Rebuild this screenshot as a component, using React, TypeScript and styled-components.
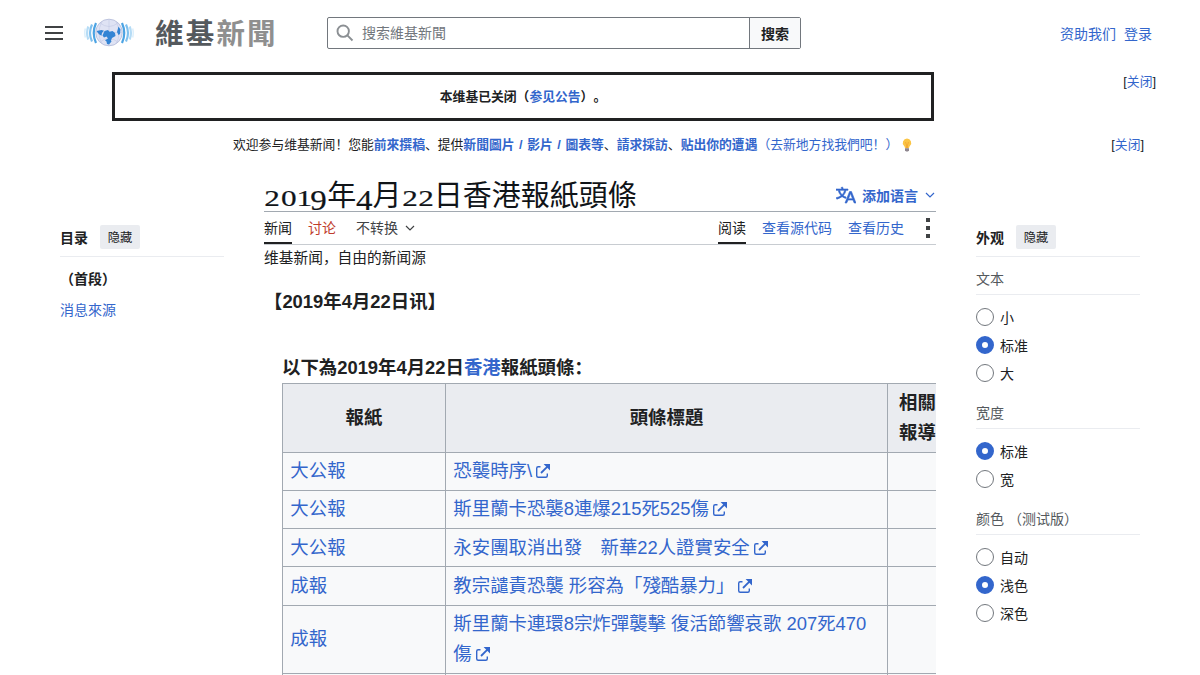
import React from "react";
import styled, { createGlobalStyle, css } from "styled-components";

const sans = `"Liberation Sans", "Noto Sans CJK SC", sans-serif`;
const blue = "#3366cc";

const Global = createGlobalStyle`
  * { box-sizing: border-box; }
  html, body { margin: 0; padding: 0; }
  body { background: #fff; color: #202122; font-family: ${sans}; font-size: 14px; height: 675px; overflow: hidden; }
`;

const Page = styled.div`
  height: 675px;
  overflow: hidden;
`;

const Link = styled.a<{ $bold?: boolean }>`
  color: ${blue};
  font-weight: ${(p) => (p.$bold ? 700 : "inherit")};
  word-spacing: ${(p) => (p.$bold ? "1px" : "normal")};
`;

const Header = styled.header`
  display: flex;
  align-items: center;
  height: 66px;
  padding: 0 48px 0 45px;
`;

const MenuButton = styled.div`
  display: flex;
  flex-direction: column;
  gap: 4px;
  width: 18px;
  span { height: 2px; background: #404244; }
`;

const Globe = styled.svg`
  width: 50px;
  height: 30px;
  margin-left: 21px;
`;

const Wordmark = styled.div`
  width: 172px;
  margin-left: 21px;
  padding-bottom: 2px;
  font-family: "Noto Sans CJK TC", sans-serif;
  font-weight: 700;
  font-size: 28.5px;
  line-height: 34px;
  letter-spacing: 2.2px;
  color: #54595d;
  white-space: nowrap;
  span { color: #8f8f8f; }
`;

const Search = styled.div`
  display: flex;
  width: 474px;
  height: 32px;
  border: 1px solid #72777d;
  border-radius: 2px;
`;

const SearchField = styled.div`
  display: flex;
  flex: 1;
  align-items: center;
  gap: 8px;
  padding-left: 8px;
  color: #72777d;
  line-height: 30px;
`;

const SearchButton = styled.div`
  width: 51px;
  border-left: 1px solid #72777d;
  background: #f8f9fa;
  font-weight: 700;
  line-height: 32px;
  text-align: center;
`;

const UserLinks = styled.nav`
  display: flex;
  gap: 8px;
  margin-left: auto;
  padding-top: 2px;
  line-height: 22px;
`;

const Notices = styled.section`
  font-size: 12.8px;
  line-height: 20px;
`;

const ClosedRow = styled.div`
  display: flex;
  align-items: flex-start;
  justify-content: space-between;
  height: 49px;
  margin-top: 6px;
  padding: 0 44px 0 112px;
`;

const ClosedBox = styled.div`
  display: flex;
  align-items: center;
  justify-content: center;
  width: 822px;
  height: 49px;
  padding-top: 1px;
  border: 3px solid #202122;
  font-weight: 700;
  text-spacing-trim: space-all;
`;

const WelcomeRow = styled.div`
  display: flex;
  align-items: center;
  height: 20px;
  margin-top: 14px;
  padding: 0 56px 0 233px;
  white-space: nowrap;
`;

const Bulb = styled.svg`
  width: 12px;
  height: 14px;
  margin-left: 3px;
`;

const Dismiss = styled.span`
  margin-left: auto;
`;

const Columns = styled.div`
  display: grid;
  grid-template-columns: 164px 672px 164px;
  column-gap: 40px;
  padding: 20px 60px 0;
`;

const Side = styled.aside`
  padding-top: 43px;
`;

const SideHeader = styled.div`
  display: flex;
  align-items: center;
  gap: 12px;
  height: 39px;
  padding-bottom: 1px;
  border-bottom: 1px solid #eaecf0;
  font-weight: 700;
`;

const HideButton = styled.span`
  width: 40px;
  height: 24px;
  padding-top: 1px;
  background: #eaecf0;
  border-radius: 2px;
  font-size: 12.25px;
  font-weight: 400;
  line-height: 24px;
  text-align: center;
`;

const TocItem = styled.div<{ $active?: boolean }>`
  height: 31px;
  line-height: 31px;
  ${(p) =>
    p.$active
      ? css`
          margin-top: 7px;
          font-weight: 700;
          color: #202122;
        `
      : css`
          color: ${blue};
        `}
`;

const Section = styled.section<{ $first?: boolean }>`
  padding-top: ${(p) => (p.$first ? 7 : 11)}px;
`;

const SectionTitle = styled.div`
  height: 31px;
  margin-bottom: 8px;
  border-bottom: 1px solid #eaecf0;
  color: #54595d;
  line-height: 31px;
`;

const Option = styled.label`
  display: flex;
  align-items: center;
  gap: 6px;
  height: 28px;
  line-height: 28px;
  span { padding-top: 2px; }
`;

const Radio = styled.i<{ $on?: boolean }>`
  width: 18px;
  height: 18px;
  border: ${(p) => (p.$on ? `6px solid ${blue}` : "1px solid #72777d")};
  border-radius: 50%;
`;

const Article = styled.main`
  min-width: 0;
  overflow: hidden;
`;

const TitleBar = styled.div`
  display: flex;
  align-items: center;
  justify-content: space-between;
  height: 37px;
  border-bottom: 1px solid #a2a9b1;
`;

const Title = styled.h1`
  margin: 0;
  padding-top: 3px;
  height: 36px;
  font-family: "Liberation Serif", "Noto Sans CJK SC", serif;
  font-weight: 400;
  font-size: 29px;
  line-height: 36px;
  color: #101418;
  white-space: nowrap;
`;

const Numeral = styled.span<{ $w: number; $low?: boolean }>`
  display: inline-block;
  width: ${(p) => p.$w}px;
  font-size: ${(p) => (p.$low ? 30 : 24)}px;
  line-height: 20px;
  text-align: center;
  vertical-align: ${(p) => (p.$low ? "-4px" : "baseline")};
  transform: scaleX(${(p) => (p.$low ? 1.1 : 1.3)});
  -webkit-text-stroke: 0.2px #101418;
`;

const Languages = styled.div`
  display: flex;
  align-items: center;
  padding-right: 1px;
  padding-top: 3px;
  color: ${blue};
  font-weight: 700;
  svg:first-child { margin-right: 6px; }
  svg:last-child { margin-left: 7px; }
`;

const Tabs = styled.nav`
  display: flex;
  gap: 16px;
  height: 33px;
  border-bottom: 1px solid #c8ccd1;
`;

const Tab = styled.span<{ $active?: boolean; $tone?: string; $push?: boolean }>`
  height: 32px;
  margin-left: ${(p) => (p.$push ? "auto" : 0)};
  border-bottom: ${(p) => (p.$active ? "2px solid #202122" : "0")};
  color: ${(p) => p.$tone || "#202122"};
  line-height: 33px;
`;

const Variant = styled.span`
  display: flex;
  align-items: center;
  gap: 7px;
  height: 32px;
  margin-left: 4px;
  color: #404244;
  line-height: 32px;
`;

const More = styled.span`
  display: flex;
  flex-direction: column;
  gap: 4px;
  margin: 6px 6px 0 6px;
  i { width: 4px; height: 4px; background: #404244; }
`;

const Tagline = styled.div`
  margin-top: 1px;
  font-size: 14.72px;
  line-height: 24px;
`;

const Dateline = styled.p`
  margin: 17px 0 0;
  font-size: 18.4px;
  font-weight: 700;
  line-height: 30px;
`;

const Listing = styled.div`
  margin: 36.4px 0 0 18px;
  font-size: 18.4px;
  line-height: 29.9px;
`;

const Lead = styled.div`
  height: 30px;
  font-weight: 700;
`;

const Table = styled.table`
  width: 666px;
  table-layout: fixed;
  border-collapse: collapse;
  background: #f8f9fa;
  th, td { border: 1px solid #a2a9b1; padding: 3.68px 7.36px; }
  th { background: #eaecf0; text-align: center; }
  th:nth-child(1) { width: 163px; }
  th:nth-child(2) { width: 442px; }
  th:nth-child(3) { padding: 3.68px 11px; }
  td { color: ${blue}; }
`;

const External = styled.svg`
  width: 16px;
  height: 16px;
  margin-left: 3px;
  vertical-align: -2px;
`;

const Chevron = ({ size = 10 }: { size?: number }) => (
  <svg width={size} height={size} viewBox="0 0 10 10" fill="none" stroke="currentColor" strokeWidth="1.2">
    <path d="M1 3l4 4 4-4" />
  </svg>
);

const ExternalIcon = () => (
  <External viewBox="0 0 16 16" fill="none" stroke={blue} strokeWidth="1.4">
    <path d="M5.5 3.7H3.2Q1.7 3.7 1.7 5.2V12.8Q1.7 14.3 3.2 14.3H10.8Q12.3 14.3 12.3 12.8V10.5" />
    <path d="M6 10L12.4 3.6" strokeWidth="1.8" />
    <path d="M8.6 1H15v6.4z" fill={blue} stroke="none" />
  </External>
);

const digits: Record<string, number> = { "0": 17.6, "1": 12.4, "2": 16.1, "4": 16.3, "9": 17.1 };

const TitleText = ({ text }: { text: string }) => (
  <Title>
    {text.split(/(\d)/).map((c, i) =>
      digits[c] ? (
        <Numeral key={i} $w={digits[c]} $low={c === "4" || c === "9"}>{c}</Numeral>
      ) : (
        c
      )
    )}
  </Title>
);

const rows = [
  ["大公報", "恐襲時序\\"],
  ["大公報", "斯里蘭卡恐襲8連爆215死525傷"],
  ["大公報", "永安團取消出發　新華22人證實安全"],
  ["成報", "教宗譴責恐襲 形容為「殘酷暴力」"],
  ["成報", "斯里蘭卡連環8宗炸彈襲擊 復活節響哀歌 207死470傷"],
];

const settings = [
  { title: "文本", options: ["小", "标准", "大"], on: 1 },
  { title: "宽度", options: ["标准", "宽"], on: 0 },
  { title: "颜色 （测试版）", options: ["自动", "浅色", "深色"], on: 1 },
];

export default function App() {
  return (
    <Page>
      <Global />
      <Header>
        <MenuButton><span /><span /><span /></MenuButton>
        <Globe viewBox="0 0 50 30" fill="none">
          <g strokeWidth="2.2">
            <path d="M12 5Q7.500 15 12 25M38 5Q42.500 15 38 25" stroke="#4ba3e3" />
            <path d="M8 6.500Q4 15 8 23.500M42 6.500Q46 15 42 23.500" stroke="#7fc0ee" />
            <path d="M4.300 8.500Q1.800 15 4.300 21.500M45.700 8.500Q48.200 15 45.700 21.500" stroke="#b5dcf6" />
            <path d="M1.300 10.500Q.2 15 1.300 19.500M48.700 10.500Q49.800 15 48.700 19.500" stroke="#dceffb" strokeWidth="1.500" />
          </g>
          <circle cx="25" cy="14.500" r="13.300" fill="#dfe3f4" stroke="#bcc3de" strokeWidth="1" />
          <path d="M25 1.500V28M12 14.500H38M16 5Q25 12 34 5M16 24Q25 17 34 24M18 3.500Q12 15 18 26M32 3.500Q38 15 32 26" stroke="#c3cae4" strokeWidth=".6" />
          <path d="M12.500 13l5-1 2.500.8-2 2-.5 3-2.500-1.500zM20.500 13l3.500-1 1.500 1.800 3-.8 2.500 2 .500 3-3.500 2-1 2.500 .5 1-2.500 3-2-.5-.5-2.500-1.500-1.200 3-1.800-1.500-2-2.500 1-1.500-2zM34.500 8.500l2 3-.5 4.500-1.500 1-1.500-3z" fill="#3384d4" />
        </Globe>
        <Wordmark>維基<span>新聞</span></Wordmark>
        <Search>
          <SearchField>
            <svg width="18" height="18" viewBox="0 0 18 18" fill="none" stroke="#8b8f93" strokeWidth="1.9">
              <circle cx="7.200" cy="7.200" r="5.700" />
              <path d="M11.400 11.400L16.500 16.500" />
            </svg>
            <span>搜索維基新聞</span>
          </SearchField>
          <SearchButton>搜索</SearchButton>
        </Search>
        <UserLinks><Link>资助我们</Link><Link>登录</Link></UserLinks>
      </Header>

      <Notices>
        <ClosedRow>
          <ClosedBox><span>本维基已关闭（<Link>参见公告</Link>）。</span></ClosedBox>
          <Dismiss>[<Link>关闭</Link>]</Dismiss>
        </ClosedRow>
        <WelcomeRow>
          <span>
            欢迎参与维基新闻！您能<Link $bold>前來撰稿</Link>、提供<Link $bold>新聞圖片 / 影片 / 圖表等</Link>、
            <Link $bold>請求採訪</Link>、<Link $bold>贴出你的遭遇</Link>
            <Link>（去新地方找我們吧！）</Link>
          </span>
          <Bulb viewBox="0 0 12 14">
            <path d="M6 .5a4.300 4.300 0 0 0-3 7.300Q4 9 4 10.300h4Q8 9 9 7.800A4.300 4.300 0 0 0 6 .5z" fill="#fbc545" />
            <path d="M4.500 4l1 3v3h1V7l1-3" stroke="#f29f2c" strokeWidth=".7" fill="none" />
            <path d="M4 10.300h4v2L7 13.500H5l-1-1.200z" fill="#8f8790" />
          </Bulb>
          <Dismiss>[<Link>关闭</Link>]</Dismiss>
        </WelcomeRow>
      </Notices>

      <Columns>
        <Side>
          <SideHeader>目录<HideButton>隐藏</HideButton></SideHeader>
          <TocItem $active>（首段）</TocItem>
          <TocItem>消息來源</TocItem>
        </Side>

        <Article>
          <TitleBar>
            <TitleText text="2019年4月22日香港報紙頭條" />
            <Languages>
              <svg width="20" height="20" viewBox="0 0 20 20" fill={blue} stroke={blue} strokeWidth=".6">
                <path d="M20 18h-1.440a.6.6 0 0 1-.4-.12.800.8 0 0 1-.23-.31L17 15h-5l-1 2.540a.800.8 0 0 1-.22.300.6.6 0 0 1-.4.140H9l4.550-11.470h1.890zm-3.530-4.310L14.890 9.500a12 12 0 0 1-.390-1.240q-.09.370-.19.690l-.19.560-1.580 4.190zm-6.300-1.580a13.400 13.400 0 0 1-2.910-1.410 11.460 11.460 0 0 0 2.810-5.370H12V4H7.310a4 4 0 0 0-.2-.56C6.870 2.790 6.600 2 6.600 2l-1.470.500s.4.890.6 1.500H0v1.330h2.150A11.230 11.230 0 0 0 5 10.700a17.200 17.200 0 0 1-5 2.100q.56.820.87 1.380a23.300 23.300 0 0 0 5.220-2.510 15.600 15.600 0 0 0 3.560 1.770zM3.630 5.330h4.910a8.100 8.100 0 0 1-2.450 4.450 9.100 9.100 0 0 1-2.460-4.450" />
              </svg>
              添加语言
              <Chevron />
            </Languages>
          </TitleBar>
          <Tabs>
            <Tab $active>新闻</Tab>
            <Tab $tone="#bf3c2c">讨论</Tab>
            <Variant>不转换<Chevron /></Variant>
            <Tab $active $push>阅读</Tab>
            <Tab $tone={blue}>查看源代码</Tab>
            <Tab $tone={blue}>查看历史</Tab>
            <More><i /><i /><i /></More>
          </Tabs>
          <Tagline>维基新闻，自由的新闻源</Tagline>
          <Dateline>【2019年4月22日讯】</Dateline>
          <Listing>
            <Lead>以下為2019年4月22日<Link>香港</Link>報紙頭條：</Lead>
            <Table>
              <thead>
                <tr><th>報紙</th><th>頭條標題</th><th>相關報導</th></tr>
              </thead>
              <tbody>
                {rows.map(([paper, headline], i) => (
                  <tr key={i}>
                    <td>{paper}</td>
                    <td>{headline}<ExternalIcon /></td>
                    <td />
                  </tr>
                ))}
                <tr><td /><td /><td /></tr>
              </tbody>
            </Table>
          </Listing>
        </Article>

        <Side>
          <SideHeader>外观<HideButton>隐藏</HideButton></SideHeader>
          {settings.map((group, g) => (
            <Section key={group.title} $first={g === 0}>
              <SectionTitle>{group.title}</SectionTitle>
              {group.options.map((name, i) => (
                <Option key={name}><Radio $on={i === group.on} /><span>{name}</span></Option>
              ))}
            </Section>
          ))}
        </Side>
      </Columns>
    </Page>
  );
}
